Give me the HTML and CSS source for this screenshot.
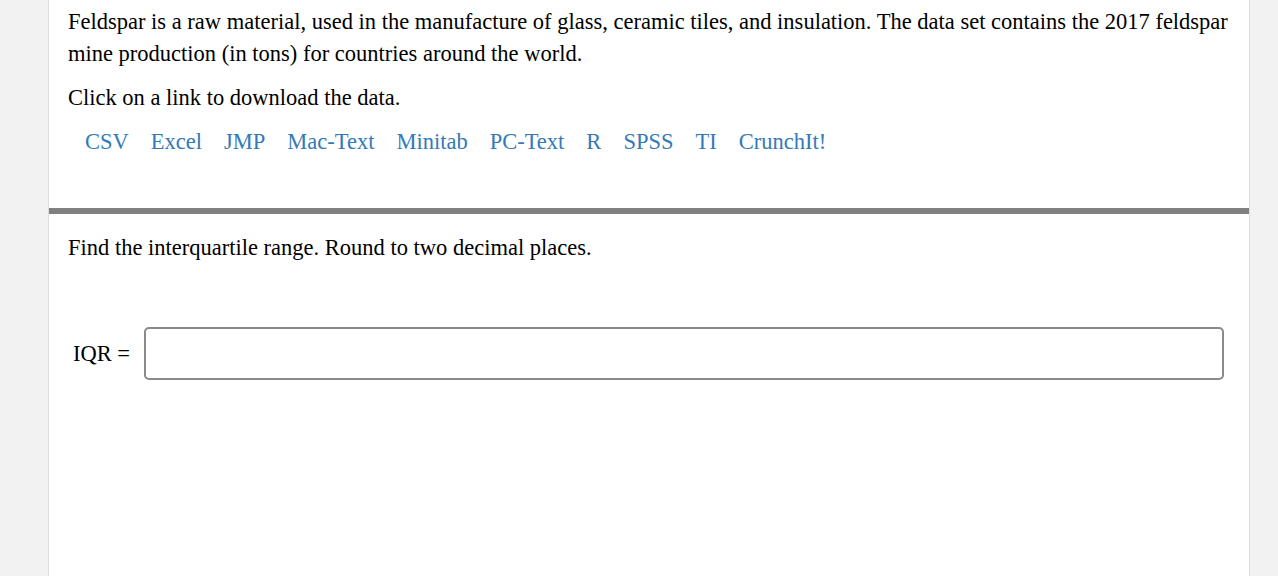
FILE: index.html
```html
<!DOCTYPE html>
<html>
<head>
<meta charset="utf-8">
<link rel="stylesheet" href="styles.css">
</head>
<body>
<div class="panel">
  <section class="intro">
    <p class="text">Feldspar is a raw material, used in the manufacture of glass, ceramic tiles, and insulation. The data set contains the 2017 feldspar mine production (in tons) for countries around the world.</p>
    <p class="text">Click on a link to download the data.</p>
    <nav class="links">
      <a href="#">CSV</a>
      <a href="#">Excel</a>
      <a href="#">JMP</a>
      <a href="#">Mac-Text</a>
      <a href="#">Minitab</a>
      <a href="#">PC-Text</a>
      <a href="#">R</a>
      <a href="#">SPSS</a>
      <a href="#">TI</a>
      <a href="#">CrunchIt!</a>
    </nav>
  </section>
  <hr class="divider">
  <section class="question">
    <p class="text">Find the interquartile range. Round to two decimal places.</p>
    <div class="answer">
      <label class="label">IQR =</label>
      <input class="field" type="text">
    </div>
  </section>
</div>
</body>
</html>
```
FILE: styles.css
```css
html, body {
  margin: 0;
  padding: 0;
  background: #f2f2f2;
  height: 100%;
}
body {
  font-family: "Liberation Serif", "Times New Roman", serif;
  font-size: 22.5px;
  color: #000;
}
.panel {
  margin-left: 48px;
  width: 1200px;
  min-height: 576px;
  background: #fff;
  border-left: 1px solid #dcdcdc;
  border-right: 1px solid #dcdcdc;
}
.intro {
  padding: 6px 20px 0 19px;
}
.text {
  margin: 0 0 12px;
  line-height: 32px;
}
.links {
  display: flex;
  gap: 22px;
  padding-left: 17px;
  line-height: 32px;
  padding-bottom: 50px;
}
.links a {
  color: #337ab7;
  text-decoration: none;
}
.divider {
  margin: 0;
  border: 0;
  height: 6px;
  background: #808080;
}
.question {
  padding: 18px 25px 0 19px;
}
.answer {
  display: flex;
  align-items: center;
  gap: 14px;
  margin-top: 63px;
  padding-left: 5px;
}
.field {
  flex: 1;
  height: 53px;
  box-sizing: border-box;
  border: 2px solid #8a8a8a;
  border-radius: 5px;
  font-size: 20px;
}
```
